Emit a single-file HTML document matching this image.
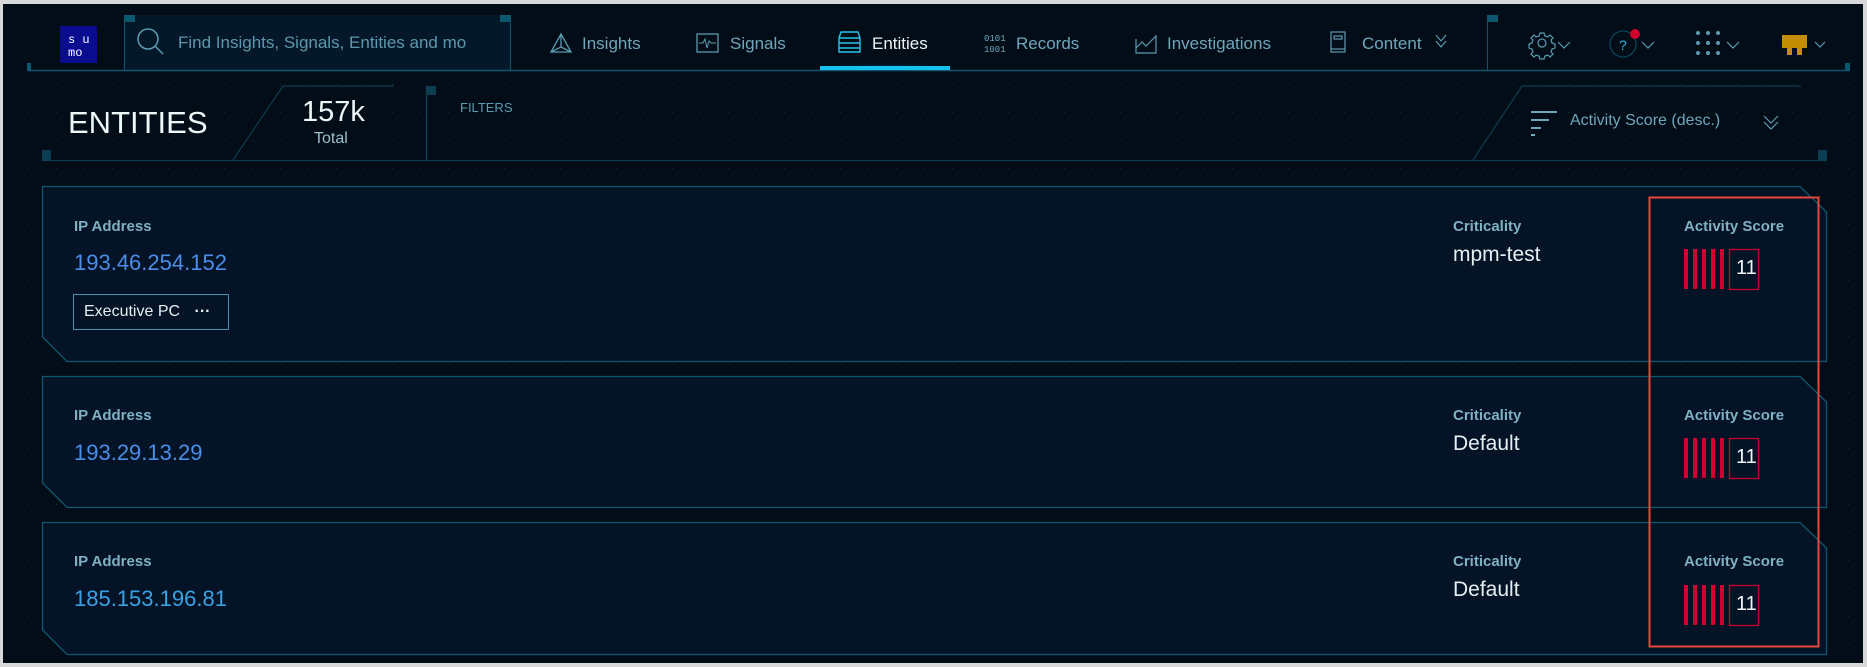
<!DOCTYPE html>
<html><head><meta charset="utf-8"><style>
*{margin:0;padding:0;box-sizing:border-box}
html,body{width:1867px;height:667px;overflow:hidden;background:#d8d8d8;font-family:"Liberation Sans",sans-serif}
#app{position:absolute;left:3px;top:4px;width:1860px;height:659px;background:#020d17;overflow:hidden}
.a{position:absolute}
.nav{color:#6fa6bb;font-size:17px;top:34px}
.lbl{color:#7fb1c3;font-size:15px;font-weight:bold}
.ip{color:#4a8ee8;font-size:22px}
.val{color:#e6eef2;font-size:21px}
.bar{position:absolute;width:4px;height:40px;background:#d0002f}
</style></head><body>
<div id="app"></div>
<svg class="a" style="left:0;top:0" width="1867" height="667">
<defs><pattern id="dots" width="28" height="28" patternUnits="userSpaceOnUse"><rect x="0" y="0" width="1" height="1" fill="#12303c"/></pattern>
<radialGradient id="glow" cx="0.5" cy="1" r="0.6"><stop offset="0" stop-color="#0c6a8a" stop-opacity="0.5"/><stop offset="1" stop-color="#0c6a8a" stop-opacity="0"/></radialGradient></defs>
<rect x="3" y="74" width="1860" height="589" fill="url(#dots)"/>
<rect x="124" y="15" width="387" height="55" fill="#04182a"/>
<line x1="124.5" y1="15" x2="124.5" y2="70" stroke="#0d5870"/>
<line x1="510.5" y1="15" x2="510.5" y2="70" stroke="#0d5870"/>
<rect x="124" y="15" width="11" height="7" fill="#0d5870"/>
<rect x="500" y="15" width="11" height="7" fill="#0d5870"/>
<rect x="27" y="63" width="4" height="7" fill="#0d5870"/>
<line x1="27" y1="70.5" x2="1850" y2="70.5" stroke="#0d5870" stroke-width="1.5"/>
<line x1="1487.5" y1="15" x2="1487.5" y2="70" stroke="#0d5870"/>
<rect x="1487" y="15" width="11" height="7" fill="#0d5870"/>
<rect x="1845" y="63" width="5" height="8" fill="#0d5870"/>
<rect x="60" y="26" width="37" height="37" fill="#0a0c8f"/>
<text x="68" y="43" fill="#fff" font-size="12" font-family="Liberation Mono">s u</text>
<text x="68" y="56" fill="#fff" font-size="12" font-family="Liberation Mono">mo</text>
<circle cx="148" cy="39" r="10" fill="none" stroke="#5c9ab0" stroke-width="1.5"/>
<line x1="155" y1="46" x2="163" y2="54" stroke="#5c9ab0" stroke-width="1.5"/>
<g stroke="#5c9ab0" fill="none" stroke-width="1.3"><path d="M561 34 L551 52 L571 52 Z M561 34 L561 47 L551 52 M561 47 L571 52"/></g>
<rect x="697" y="34" width="21" height="18" fill="none" stroke="#5c9ab0" stroke-width="1.3"/>
<path d="M699 43 H703 L705 39 L707 48 L709 41 L711 43 H716" fill="none" stroke="#5c9ab0"/>
<rect x="820" y="58" width="130" height="12" fill="url(#glow)"/>
<g stroke="#27c4ee" fill="none" stroke-width="1.4"><path d="M841 32 H858 L860 38 V52 H839 V38 Z M839 38 H860 M839 43 H860 M839 48 H860"/></g>
<rect x="820" y="66" width="130" height="4" fill="#16c0ef"/>
<text x="984" y="41" fill="#6fa6bb" font-size="9" font-family="Liberation Mono">0101</text>
<text x="984" y="52" fill="#6fa6bb" font-size="9" font-family="Liberation Mono">1001</text>
<g stroke="#5c9ab0" fill="none" stroke-width="1.2"><path d="M1136 39 V53 H1156 V35 M1136 48 L1142 42 L1146 46 L1156 36"/></g>
<g stroke="#5c9ab0" fill="none" stroke-width="1.2"><rect x="1331" y="32" width="14" height="20"/><rect x="1334" y="36" width="8" height="3"/><line x1="1331" y1="49" x2="1345" y2="49"/></g>
<path d="M1436 35 L1441 41 L1446 35 M1436 41 L1441 47 L1446 41" stroke="#5c9ab0" fill="none" stroke-width="1.2"/>
<g stroke="#5c9ab0" fill="none" stroke-width="1.2"><circle cx="1542" cy="43" r="4"/><path d="M1540 33 h4 l1 3 l3 1 l2-2 l3 3 l-2 2 l1 3 l3 1 v4 l-3 1 l-1 3 l2 2 l-3 3 l-2-2 l-3 1 l-1 3 h-4 l-1-3 l-3-1 l-2 2 l-3-3 l2-2 l-1-3 l-3-1 v-4 l3-1 l1-3 l-2-2 l3-3 l2 2 l3-1 z"/></g>
<path d="M1558 42 l6 6 l6-6" stroke="#5c9ab0" fill="none" stroke-width="1.2"/>
<circle cx="1623" cy="44" r="13" fill="none" stroke="#0d4558" stroke-width="1.3"/>
<text x="1619" y="50" fill="#27b4e4" font-size="14">?</text>
<circle cx="1635" cy="34" r="5" fill="#d0002f"/>
<path d="M1642 42 l6 6 l6-6" stroke="#5c9ab0" fill="none" stroke-width="1.2"/>
<g fill="#5c9ab0"><circle cx="1698" cy="33" r="2"/><circle cx="1708" cy="33" r="2"/><circle cx="1718" cy="33" r="2"/><circle cx="1698" cy="43" r="2"/><circle cx="1708" cy="43" r="2"/><circle cx="1718" cy="43" r="2"/><circle cx="1698" cy="53" r="2"/><circle cx="1708" cy="53" r="2"/><circle cx="1718" cy="53" r="2"/></g>
<path d="M1727 42 l6 6 l6-6" stroke="#5c9ab0" fill="none" stroke-width="1.2"/>
<path d="M1782 35 H1807 V48 H1802 V55 H1797 V48 H1792 V55 H1787 V48 H1782 Z" fill="#c48d06"/>
<path d="M1815 42 l5 5 l5-5" stroke="#5c9ab0" fill="none" stroke-width="1.2"/>
<path d="M233 160 L283 86 H394" fill="none" stroke="#0d3d50" stroke-width="1.2"/>
<line x1="426.5" y1="86" x2="426.5" y2="160" stroke="#0d4558" stroke-width="1.3"/>
<rect x="426" y="86" width="10" height="9" fill="#0d3d50"/>
<line x1="42" y1="160.5" x2="1827" y2="160.5" stroke="#0d3d50" stroke-width="1.3"/>
<rect x="42" y="150" width="9" height="11" fill="#0d3d50"/>
<path d="M1473 160 L1522 86 H1801" fill="none" stroke="#0d3d50" stroke-width="1.2"/>
<rect x="1818" y="150" width="9" height="11" fill="#0d3d50"/>
<g fill="#6fa6bb"><rect x="1531" y="111" width="26" height="2"/><rect x="1531" y="119" width="18" height="2"/><rect x="1531" y="127" width="10" height="2"/><rect x="1531" y="134" width="4" height="2"/></g>
<path d="M1764 116 l7 7 l7-7 M1764 122 l7 7 l7-7" stroke="#5c9ab0" fill="none" stroke-width="1.2"/>
<g fill="#041325" stroke="#0d5870" stroke-width="1.3">
<path d="M42.5 186.5 H1800 L1826.5 212 V361.5 H67 L42.5 337 Z"/>
<path d="M42.5 376.5 H1800 L1826.5 402 V507.5 H67 L42.5 483 Z"/>
<path d="M42.5 522.5 H1800 L1826.5 548 V654.5 H67 L42.5 630 Z"/>
</g>
<rect x="1649.5" y="197.5" width="169" height="449" fill="none" stroke="#e8463a" stroke-width="2"/>
<rect x="73.5" y="294.5" width="155" height="35" fill="none" stroke="#4a8fa8"/>
<g fill="none" stroke="#c8002e" stroke-width="1.3"><rect x="1729.5" y="249.5" width="29" height="40"/><rect x="1729.5" y="438.5" width="29" height="40"/><rect x="1729.5" y="585.5" width="29" height="40"/></g>
</svg>
<div class="a nav" style="left:178px;top:33px;color:#5e97ad">Find Insights, Signals, Entities and mo</div>
<div class="a nav" style="left:582px">Insights</div>
<div class="a nav" style="left:730px">Signals</div>
<div class="a nav" style="left:872px;color:#eef4f6">Entities</div>
<div class="a nav" style="left:1016px">Records</div>
<div class="a nav" style="left:1167px">Investigations</div>
<div class="a nav" style="left:1362px">Content</div>
<div class="a" style="left:68px;top:105px;color:#eef6f8;font-size:31px">ENTITIES</div>
<div class="a" style="left:302px;top:96px;color:#eef6f8;font-size:29px">157k</div>
<div class="a" style="left:314px;top:130px;color:#9cc0ce;font-size:16px">Total</div>
<div class="a" style="left:460px;top:100px;color:#5c9ab0;font-size:13px">FILTERS</div>
<div class="a" style="left:1570px;top:112px;color:#6fa6bb;font-size:16px">Activity Score (desc.)</div>

<div class="a lbl" style="left:74px;top:218px">IP Address</div>
<div class="a ip" style="left:74px;top:250px">193.46.254.152</div>
<div class="a" style="left:84px;top:303px;color:#e6eef2;font-size:16px">Executive PC <span style="margin-left:10px;font-weight:bold">···</span></div>
<div class="a lbl" style="left:1453px;top:218px">Criticality</div>
<div class="a val" style="left:1453px;top:243px">mpm-test</div>
<div class="a lbl" style="left:1684px;top:218px">Activity Score</div>

<div class="a lbl" style="left:74px;top:407px">IP Address</div>
<div class="a ip" style="left:74px;top:440px">193.29.13.29</div>
<div class="a lbl" style="left:1453px;top:407px">Criticality</div>
<div class="a val" style="left:1453px;top:432px">Default</div>
<div class="a lbl" style="left:1684px;top:407px">Activity Score</div>

<div class="a lbl" style="left:74px;top:553px">IP Address</div>
<div class="a ip" style="left:74px;top:586px;color:#3aa2e4">185.153.196.81</div>
<div class="a lbl" style="left:1453px;top:553px">Criticality</div>
<div class="a val" style="left:1453px;top:578px">Default</div>
<div class="a lbl" style="left:1684px;top:553px">Activity Score</div>

<div class="bar" style="left:1684px;top:249px"></div><div class="bar" style="left:1693px;top:249px"></div><div class="bar" style="left:1702px;top:249px"></div><div class="bar" style="left:1711px;top:249px"></div><div class="bar" style="left:1720px;top:249px"></div>
<div class="bar" style="left:1684px;top:438px"></div><div class="bar" style="left:1693px;top:438px"></div><div class="bar" style="left:1702px;top:438px"></div><div class="bar" style="left:1711px;top:438px"></div><div class="bar" style="left:1720px;top:438px"></div>
<div class="bar" style="left:1684px;top:585px"></div><div class="bar" style="left:1693px;top:585px"></div><div class="bar" style="left:1702px;top:585px"></div><div class="bar" style="left:1711px;top:585px"></div><div class="bar" style="left:1720px;top:585px"></div>
<div class="a" style="left:1736px;top:257px;color:#eef4f6;font-size:20px">11</div>
<div class="a" style="left:1736px;top:446px;color:#eef4f6;font-size:20px">11</div>
<div class="a" style="left:1736px;top:593px;color:#eef4f6;font-size:20px">11</div>
</body></html>
